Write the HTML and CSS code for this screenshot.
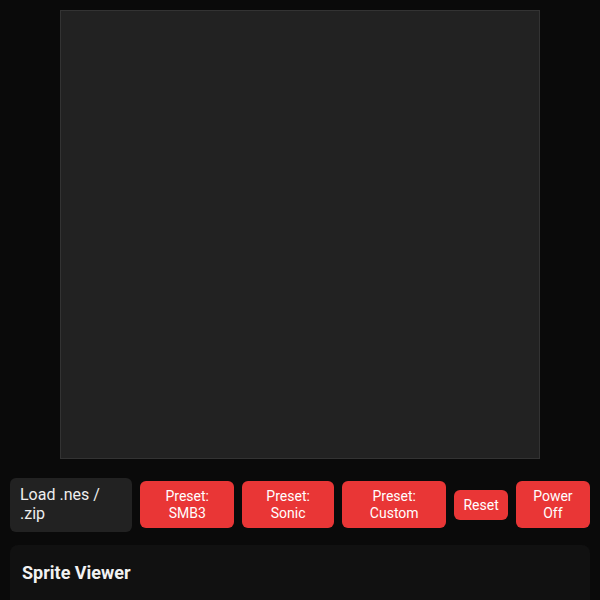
FILE: index.html
```html
<!DOCTYPE html>
<html>
<head>
<meta charset="utf-8">
<link rel="stylesheet" href="styles.css">
</head>
<body>
<div class="screen-wrap">
  <div class="screen"></div>
</div>
<div class="controls">
  <label class="file-label">Load .nes / .zip</label>
  <button class="btn">Preset: SMB3</button>
  <button class="btn">Preset: Sonic</button>
  <button class="btn">Preset: Custom</button>
  <button class="btn">Reset</button>
  <button class="btn">Power Off</button>
</div>
<section class="panel">
  <h3 class="panel-title">Sprite Viewer</h3>
</section>
</body>
</html>
```

FILE: styles.css
```css
html, body {
  margin: 0;
  background: #0a0a0a;
}
body {
  padding: 10px;
  font-family: Roboto, "Liberation Sans", sans-serif;
  color: #eee;
}
.screen-wrap {
  display: flex;
  justify-content: center;
}
.screen {
  width: 478px;
  height: 447px;
  background: #222;
  border: 1px solid #333;
}
.controls {
  display: flex;
  align-items: center;
  gap: 8px;
  margin-top: 19px;
}
.file-label {
  background: #222;
  color: #eee;
  font-size: 16px;
  line-height: 18.75px;
  padding: 8px 14px 8px 10px;
  border-radius: 6px;
}
.btn {
  font-family: Roboto, "Liberation Sans", sans-serif;
  font-size: 14px;
  line-height: 16.4px;
  padding: 7px 9px;
  background: #e93636;
  color: #fff;
  border: none;
  border-radius: 6px;
}
.panel {
  margin-top: 13px;
  background: #111;
  border-radius: 8px;
  padding: 12px;
  height: 40px;
}
.panel-title {
  margin: 5px 0 0;
  font-size: 18px;
  font-weight: 700;
  color: #f2f2f2;
}
```
